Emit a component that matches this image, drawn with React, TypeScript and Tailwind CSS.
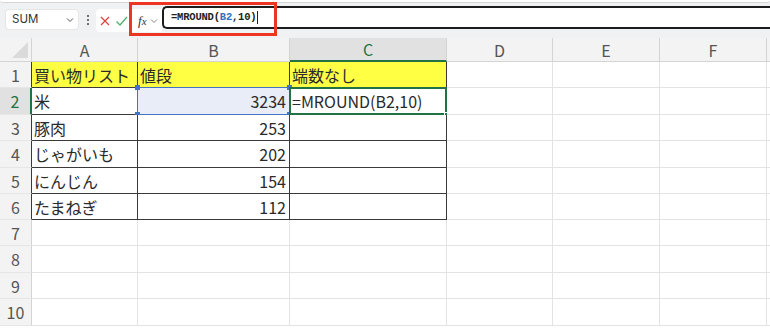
import React from 'react';

const COLS = [
  { key: 'A', w: 'w-[106px]' },
  { key: 'B', w: 'w-[152px]' },
  { key: 'C', w: 'w-[157px]' },
  { key: 'D', w: 'w-[106px]' },
  { key: 'E', w: 'w-[107px]' },
  { key: 'F', w: 'w-[107px]' },
];

const ROW_H = ['h-[26px]', 'h-[27px]', 'h-[26px]', 'h-[27px]', 'h-[26px]', 'h-[26px]', 'h-[26px]', 'h-[27px]', 'h-[26px]', 'h-[27px]'];

const DATA: Record<number, string[]> = {
  1: ['買い物リスト', '値段', '端数なし'],
  2: ['米', '3234', '=MROUND(B2,10)'],
  3: ['豚肉', '253', ''],
  4: ['じゃがいも', '202', ''],
  5: ['にんじん', '154', ''],
  6: ['たまねぎ', '112', ''],
};

function Handle({ pos, color }: { pos: string; color: string }) {
  return <span className={`absolute w-[5px] h-[5px] ${pos} ${color}`} />;
}

function Cell({ row, col }: { row: number; col: number }) {
  const inTable = row <= 6 && col <= 2;
  const text = DATA[row]?.[col] ?? '';
  const isNum = col === 1 && row > 1;
  const yellow = row === 1 && col <= 2;
  const refCell = row === 2 && col === 1;
  const active = row === 2 && col === 2;

  return (
    <div
      className={[
        'relative shrink-0 flex items-center border-r border-b px-[2px] whitespace-nowrap overflow-visible',
        COLS[col].w,
        inTable ? 'border-[#3a3a3a]' : 'border-[#e3e3e3]',
        yellow ? 'bg-[#ffff44]' : refCell ? 'bg-[#e8edf7]' : 'bg-white',
        isNum ? 'justify-end pr-[3px]' : 'justify-start',
      ].join(' ')}
    >
      <span className="relative z-10">{text}</span>
      {refCell && (
        <>
          <span className="absolute -left-px -top-px -right-px -bottom-px border border-[#4472c4]" />
          <Handle pos="-left-[3px] -top-[3px]" color="bg-[#4472c4]" />
          <Handle pos="-right-[3px] -top-[3px]" color="bg-[#4472c4]" />
          <Handle pos="-left-[3px] -bottom-[3px]" color="bg-[#4472c4]" />
          <Handle pos="-right-[3px] -bottom-[3px]" color="bg-[#4472c4]" />
        </>
      )}
      {active && (
        <>
          <span className="absolute -left-px -top-px -right-px -bottom-px border-2 border-[#217346]" />
          <Handle pos="-right-[3px] -bottom-[3px]" color="bg-[#217346] border border-white" />
        </>
      )}
    </div>
  );
}

function FormulaBar() {
  return (
    <div className="relative h-[38px] bg-[#f0f1f3]">
      <div className="h-[3px] bg-white rounded-b-[4px] border-b border-[#d6d6d6]" />
      <div className="flex items-start pt-[6px]">
        {/* Name box */}
        <div className="ml-[5px] w-[74px] h-[21px] bg-white rounded-[4px] border border-[#e6e6e6] flex items-center justify-between pl-[6px] pr-[4px]">
          <span className="text-[11.5px] text-[#333] font-['Inter','Noto_Sans',sans-serif]">SUM</span>
          <svg width="8" height="6" viewBox="0 0 8 6" className="text-[#555]">
            <path d="M1 1.5 L4 4.5 L7 1.5" fill="none" stroke="currentColor" strokeWidth="1" />
          </svg>
        </div>
        {/* kebab */}
        <div className="w-[17px] h-[21px] flex flex-col items-center justify-center gap-[2px]">
          <span className="w-[2px] h-[2px] bg-[#444] rounded-full" />
          <span className="w-[2px] h-[2px] bg-[#444] rounded-full" />
          <span className="w-[2px] h-[2px] bg-[#444] rounded-full" />
        </div>
        {/* cancel / enter / fx */}
        <div className="h-[23px] w-[66px] bg-white rounded-l-[4px] flex items-center">
          <svg width="12" height="12" viewBox="0 0 12 12" className="ml-[3px]">
            <path d="M2 2 L10 10 M10 2 L2 10" stroke="#e0403a" strokeWidth="1.2" />
          </svg>
          <svg width="13" height="12" viewBox="0 0 13 12" className="ml-[4px]">
            <path d="M1.5 6.5 L5 10 L12 2" fill="none" stroke="#4caf6a" strokeWidth="1.2" />
          </svg>
          <span className="ml-[10px] text-[13px] italic font-['Liberation_Serif',serif] text-[#333] leading-none">
            f<span className="text-[11px]">x</span>
          </span>
          <svg width="8" height="6" viewBox="0 0 8 6" className="ml-[3px] text-[#888]">
            <path d="M1 1.5 L4 4.5 L7 1.5" fill="none" stroke="currentColor" strokeWidth="1" />
          </svg>
        </div>
        {/* formula input */}
        <div className="-mt-[3px] h-[23px] flex-1 bg-white border-y-2 border-l-2 border-[#1c1c1c] rounded-l-[5px] flex items-center pl-[7px]">
          <span className="text-[10.5px] font-['Liberation_Mono',monospace] font-bold text-[#222] tracking-[-0.2px]">
            =MROUND(<span className="text-[#3270c0]">B2</span>,10)
          </span>
          <span className="ml-[1px] w-px h-[13px] bg-[#222]" />
        </div>
      </div>
      {/* annotation highlight */}
      <div className="absolute left-[129px] top-[2px] w-[148px] h-[34px] border-[3px] border-[#ee3524]" />
    </div>
  );
}

function Grid() {
  return (
    <div className="font-['Noto_Sans_CJK_JP','Noto_Sans',sans-serif] text-[16px] text-[#2a2a2a]">
      {/* column headers */}
      <div className="flex h-[24px] bg-[#f3f3f3]">
        <div className="relative w-[32px] shrink-0 border-r border-b border-[#d4d4d4]">
          <svg width="16" height="16" viewBox="0 0 16 16" className="absolute right-[3px] bottom-[3px]">
            <path d="M16 0 L16 16 L0 16 Z" fill="#dadada" />
          </svg>
        </div>
        {COLS.map((c, i) => (
          <div
            key={c.key}
            className={[
              'shrink-0 flex items-center justify-center border-r',
              c.w,
              i === 2
                ? 'bg-[#e1e1e1] text-[#217346] border-b-2 border-b-[#217346] border-r-[#d4d4d4]'
                : 'text-[#555] border-b border-[#d4d4d4]',
            ].join(' ')}
          >
            {c.key}
          </div>
        ))}
        <div className="flex-1 border-b border-[#d4d4d4]" />
      </div>
      {/* rows */}
      {ROW_H.map((h, idx) => {
        const r = idx + 1;
        return (
          <div key={r} className={`flex ${h}`}>
            <div
              className={[
                'w-[32px] shrink-0 flex items-center justify-center border-b border-r',
                r === 2
                  ? 'bg-[#e1e1e1] text-[#217346] border-r-2 border-r-[#217346] border-b-[#e6e6e6]'
                  : 'bg-[#f3f3f3] text-[#555] border-b-[#e6e6e6]',
                r !== 2 && r <= 6 ? 'border-r-[#3a3a3a]' : '',
                r > 6 ? 'border-r-[#d4d4d4]' : '',
              ].join(' ')}
            >
              {r}
            </div>
            {COLS.map((_, c) => (
              <Cell key={c} row={r} col={c} />
            ))}
            <div className="flex-1 border-b border-[#e3e3e3]" />
          </div>
        );
      })}
    </div>
  );
}

export default function App() {
  return (
    <div className="w-[770px] h-[328px] overflow-hidden bg-white">
      <FormulaBar />
      <Grid />
    </div>
  );
}
